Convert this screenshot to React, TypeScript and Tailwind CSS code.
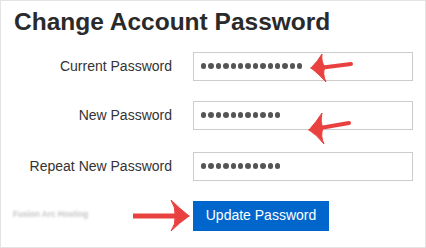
import React from "react";

const fields = [
  { label: "Current Password", dots: 14 },
  { label: "New Password", dots: 11 },
  { label: "Repeat New Password", dots: 11 },
];

function Dots({ count }: { count: number }) {
  return (
    <div className="flex items-center gap-[2px]">
      {Array.from({ length: count }).map((_, i) => (
        <div key={i} className="w-[5.4px] h-[5.4px] rounded-full bg-[#555]" />
      ))}
    </div>
  );
}

export default function App() {
  return (
    <div className="relative w-[426px] h-[248px] overflow-hidden border border-[#e3e3e3] bg-white text-[#333] font-['Liberation_Sans',Arial,sans-serif]">
      <h1 className="pl-[13px] pt-[9px] text-[24.5px] font-bold leading-none text-[#2a2a2a]">
        Change Account Password
      </h1>

      <div className="mt-[17px] flex flex-col">
        {fields.map((f, i) => (
          <div
            key={f.label}
            className={`flex items-center ${i === 0 ? "" : i === 1 ? "mt-[20px]" : "mt-[22px]"}`}
          >
            <label className="w-[171px] text-right text-[14px] leading-none">
              {f.label}
            </label>
            <div className="ml-[21px] flex h-[29px] w-[220px] items-center border border-[#ccc] pl-[7px]">
              <Dots count={f.dots} />
            </div>
          </div>
        ))}

        <div className="mt-[20px] flex items-center">
          <div className="w-[171px] pl-[12px]">
            <span className="block text-[8.2px] font-bold text-[#c4c4c4] blur-[0.8px]">
              Fusion Arc Hosting
            </span>
          </div>
          <button className="ml-[21px] h-[30px] w-[136px] bg-[#0066cc] text-[14px] text-white">
            Update Password
          </button>
        </div>
      </div>

      {/* red annotation arrows */}
      <svg
        className="pointer-events-none absolute left-[-1px] top-[-1px]"
        width="426"
        height="248"
        viewBox="0 0 426 248"
      >
        <g fill="#e8413f" stroke="#e8413f" strokeLinecap="round">
          <line x1="323" y1="67.5" x2="351" y2="64" strokeWidth="4" />
          <path
            d="M311,68 Q318,61 322,54 Q321,62 325,67 Q322,74 326,82 Q318,73 311,68 Z"
            strokeWidth="1"
          />
          <line x1="320" y1="128" x2="349" y2="123" strokeWidth="4" />
          <path
            d="M309,130 Q317,121 322,113 Q320,122 323,128 Q320,136 324,144 Q316,134 309,130 Z"
            strokeWidth="1"
          />
          <line x1="133" y1="216" x2="176" y2="216" strokeWidth="5" strokeLinecap="butt" />
          <path
            d="M189,216 Q179,208 171,200 Q176,208 175,216 Q176,224 171,231 Q179,223 189,216 Z"
            strokeWidth="1"
          />
        </g>
      </svg>
    </div>
  );
}
